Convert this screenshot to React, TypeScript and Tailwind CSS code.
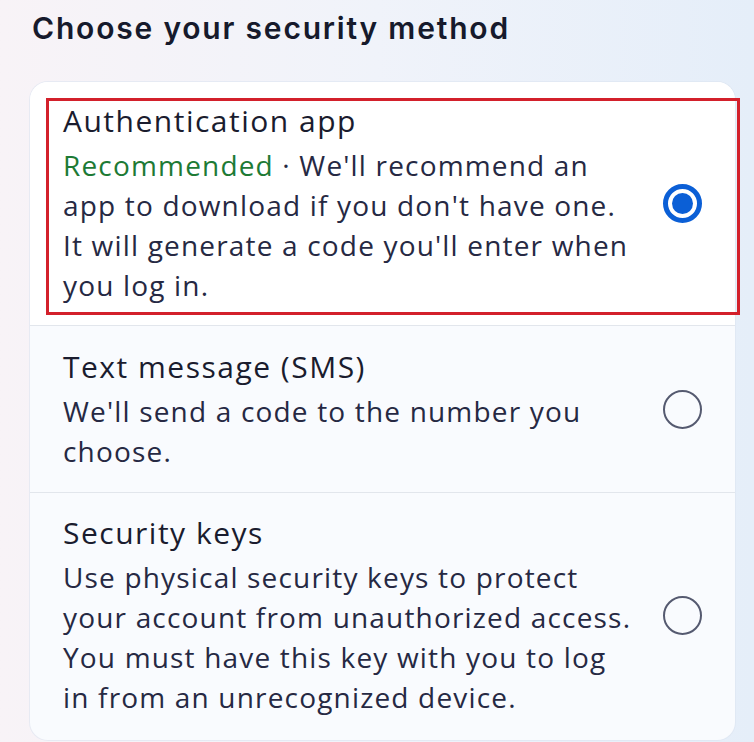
import type { ReactNode } from "react"

type Method = {
    title: string
    lines: ReactNode[]
    selected?: boolean
}

const methods: Method[] = [
    {
        title: "Authentication app",
        selected: true,
        lines: [
            <>
                <span className="text-[#1d7a35]">Recommended</span> · We'll recommend an
            </>,
            "app to download if you don't have one.",
            "It will generate a code you'll enter when",
            "you log in.",
        ],
    },
    {
        title: "Text message (SMS)",
        lines: ["We'll send a code to the number you", "choose."],
    },
    {
        title: "Security keys",
        lines: [
            "Use physical security keys to protect",
            "your account from unauthorized access.",
            "You must have this key with you to log",
            "in from an unrecognized device.",
        ],
    },
]

function Radio({ checked }: { checked?: boolean }) {
    if (checked) {
        return (
            <div className="flex h-[39px] w-[39px] shrink-0 items-center justify-center rounded-full border-[5px] border-[#0b5fd6]">
                <div className="h-[21px] w-[21px] rounded-full bg-[#0b5fd6]" />
            </div>
        )
    }
    return <div className="h-[39px] w-[39px] shrink-0 rounded-full border-[2.5px] border-[#555a70]" />
}

export default function App() {
    return (
        <div className="min-h-screen w-full bg-gradient-to-r from-[#f8f3f7] via-[#f0f3fa] to-[#e5eef9] pl-[30px] pr-[19px] pt-[10px] font-['Open_Sans',sans-serif] text-[#20223a]">
            <h1 className="pl-[2px] font-['Inter',sans-serif] text-[30px] font-semibold leading-[36px] tracking-[0.06em] text-[#161a2c]">
                Choose your security method
            </h1>

            <div className="mt-[36px] rounded-[18px] bg-[#f9fbfe] shadow-[0_0_0_1px_rgba(220,228,240,0.6)]">
                {methods.map((m, i) => (
                    <div
                        key={m.title}
                        className={
                            "relative flex items-center gap-3 px-[33px] " +
                            (i === 0
                                ? "rounded-t-[18px] bg-white pb-[20px] pt-[19px]"
                                : i === 1
                                  ? "border-t border-[#e2e6ec] pb-[21px] pt-[21px]"
                                  : "border-t border-[#e2e6ec] pb-[23px] pt-[20px]")
                        }
                    >
                        <div className="min-w-0 flex-1">
                            <div className="text-[30px] leading-[40px] tracking-[0.05em] text-[#1a1c2e]">{m.title}</div>
                            <div className="mt-1 text-[28px] leading-[40px] tracking-[0.042em] text-[#262943]">
                                {m.lines.map((line, j) => (
                                    <div key={j} className="whitespace-nowrap">
                                        {line}
                                    </div>
                                ))}
                            </div>
                        </div>
                        <Radio checked={m.selected} />

                        {m.selected && (
                            <div className="pointer-events-none absolute bottom-[10px] left-[16px] right-[-5px] top-[16px] border-[3px] border-[#d3202b]" />
                        )}
                    </div>
                ))}
            </div>
        </div>
    )
}
